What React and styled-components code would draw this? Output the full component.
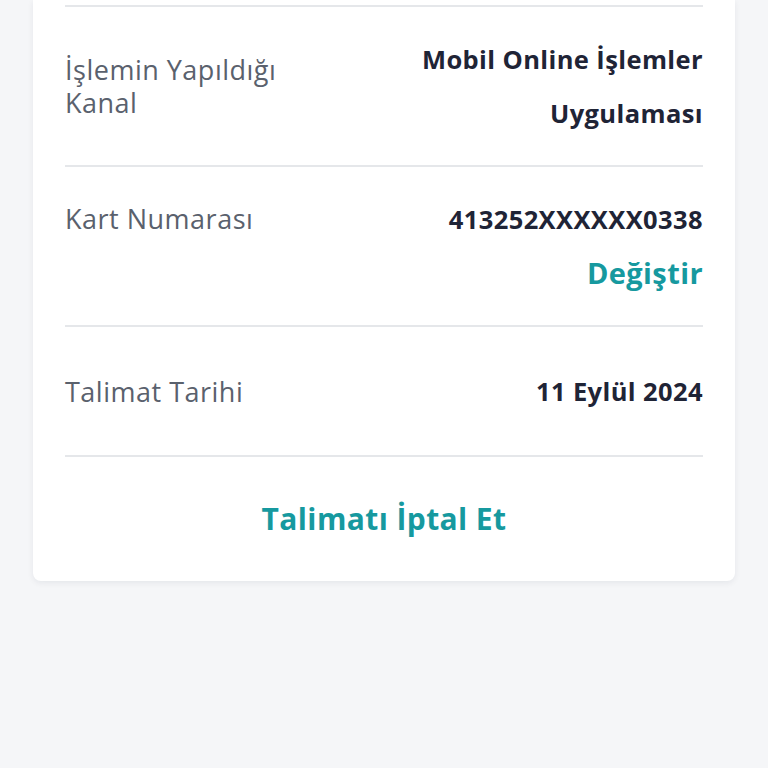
import styled, { createGlobalStyle } from 'styled-components';

const GlobalStyle = createGlobalStyle`
    html, body {
        margin: 0;
        padding: 0;
        background-color: #f5f6f8;
        font-family: "Open Sans", Lato, sans-serif;
    }
`;

const Page = styled.div`
    min-height: 768px;
    padding: 0 33px;
    box-sizing: border-box;
`;

const Card = styled.div`
    background-color: #ffffff;
    border-radius: 0 0 8px 8px;
    box-shadow: 0 2px 6px rgba(20, 30, 50, 0.07);
    padding: 5px 32px 0;
`;

const Row = styled.div`
    display: flex;
    justify-content: space-between;
    align-items: ${({ $align }) => $align || 'center'};
    padding: ${({ $pad }) => $pad || 25}px 0;
    border-top: 2px solid #e5e7ea;
`;

const Label = styled.div`
    max-width: 250px;
    color: #5a616d;
    font-size: 27px;
    letter-spacing: 0.5px;
    line-height: ${({ $lh }) => $lh || 33}px;
    font-weight: 500;
`;

const ValueCol = styled.div`
    display: flex;
    flex-direction: column;
    align-items: flex-end;
    max-width: 330px;
    text-align: right;
`;

const Value = styled.div`
    color: #1f2436;
    font-size: 25.5px;
    letter-spacing: 0.4px;
    line-height: 54px;
    font-weight: 700;
`;

const LinkText = styled.div`
    color: #16999f;
    font-size: ${({ $size }) => $size || 29}px;
    letter-spacing: 0.4px;
    line-height: 54px;
    font-weight: 700;
`;

const Action = styled.div`
    border-top: 2px solid #e5e7ea;
    display: flex;
    justify-content: center;
    padding: 35px 0;
`;

export default function App() {
    return (
        <>
            <GlobalStyle />
            <Page>
                <Card>
                    <Row>
                        <Label>İşlemin Yapıldığı Kanal</Label>
                        <ValueCol>
                            <Value>Mobil Online İşlemler Uygulaması</Value>
                        </ValueCol>
                    </Row>
                    <Row $align="flex-start">
                        <Label $lh={54}>Kart Numarası</Label>
                        <ValueCol>
                            <Value>413252XXXXXX0338</Value>
                            <LinkText>Değiştir</LinkText>
                        </ValueCol>
                    </Row>
                    <Row $pad={37}>
                        <Label>Talimat Tarihi</Label>
                        <ValueCol>
                            <Value>11 Eylül 2024</Value>
                        </ValueCol>
                    </Row>
                    <Action>
                        <LinkText $size={30}>Talimatı İptal Et</LinkText>
                    </Action>
                </Card>
            </Page>
        </>
    );
}
